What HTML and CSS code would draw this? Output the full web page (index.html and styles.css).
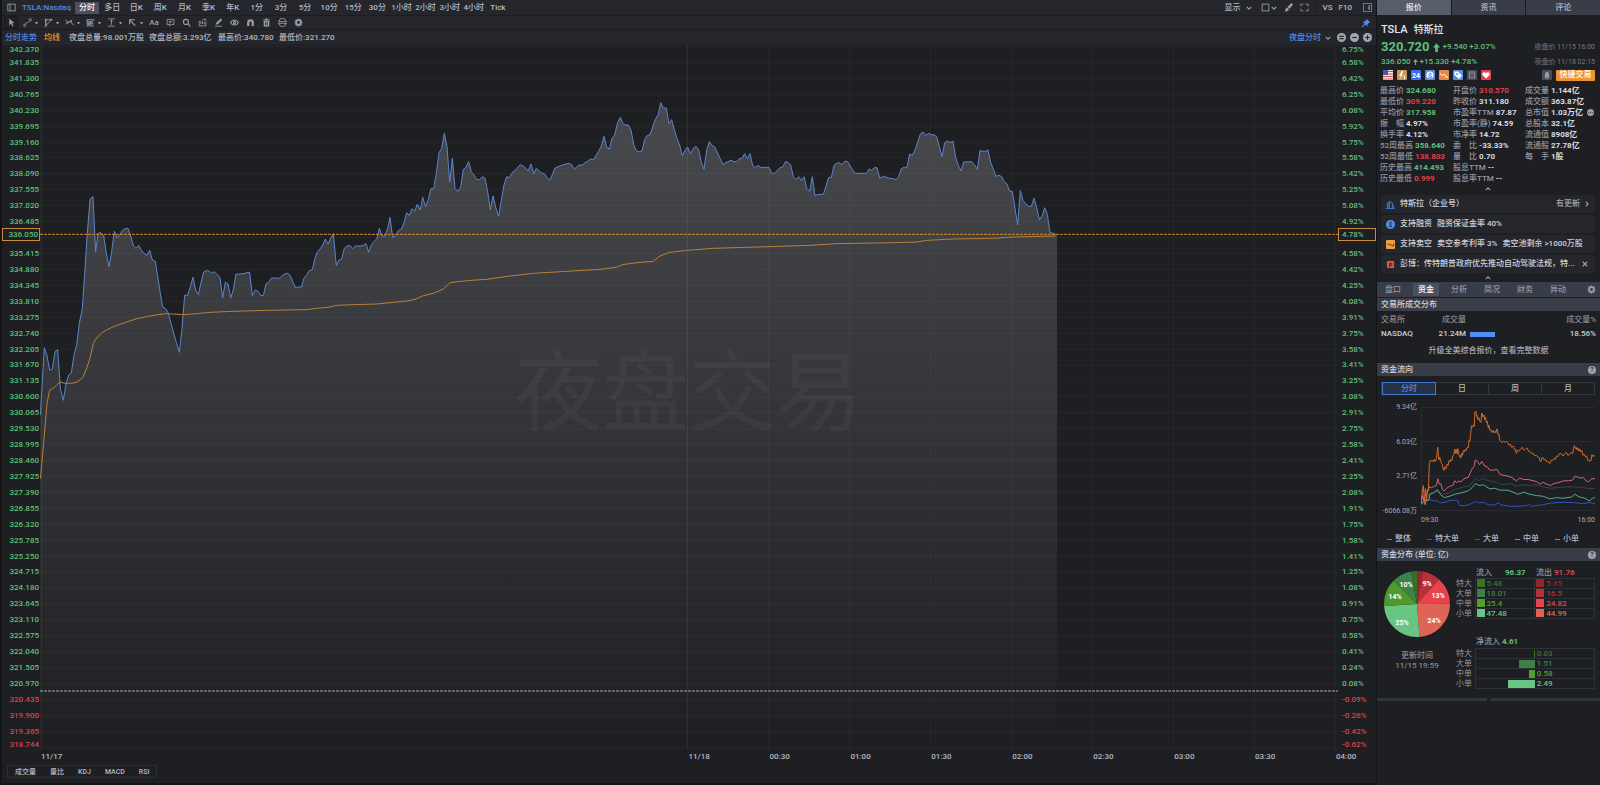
FILE: index.html
```html
<!DOCTYPE html>
<html lang="zh-CN">
<head>
<meta charset="utf-8">
<title>TSLA 特斯拉</title>
<link rel="stylesheet" href="styles.css">
</head>
<body>
<div class="app">
<main class="main">
  <nav class="bar periods">
    <button class="icon-btn" aria-label="侧栏"><svg class="ico" viewBox="0 0 16 16"><rect x="1.500" y="2" width="13" height="12"/><path d="M5.500 2v12"/></svg></button>
    <strong class="symbol">TSLA:Nasdaq</strong>
    <div class="period-list">
      <button class="active">分时</button><button>多日</button><button>日K</button><button>周K</button><button>月K</button><button>季K</button><button>年K</button><button>1分</button><button>3分</button><button>5分</button><button>10分</button><button>15分</button><button>30分</button><button>1小时</button><button>2小时</button><button>3小时</button><button>4小时</button><button>Tick</button>
    </div>
    <div class="bar-right">
      <button class="drop">显示<svg class="caret" viewBox="0 0 8 8"><path d="M1 2.500l3 3 3-3"/></svg></button>
      <button class="drop tight" aria-label="布局"><svg class="ico" viewBox="0 0 16 16"><rect x="2" y="2" width="12" height="12"/></svg><svg class="caret" viewBox="0 0 8 8"><path d="M1 2.500l3 3 3-3"/></svg></button>
      <button class="icon-btn" aria-label="画笔"><svg class="ico" viewBox="0 0 16 16"><path class="solid" d="M13 0l3 3-6 7-4-3zM5 8l4 3c-1 3-4 4-8 4 2-2 1-5 4-7z"/></svg></button>
      <button class="icon-btn" aria-label="全屏"><svg class="ico" viewBox="0 0 16 16"><path d="M1.500 6V2H6M10 2h4.500v4M14.500 10v4H10M6 14H1.500v-4"/></svg></button>
      <i class="sep"></i>
      <button class="txt">VS</button><button class="txt f10">F10</button>
      <button class="icon-btn" aria-label="报价栏"><svg class="ico blue" viewBox="0 0 16 16"><rect x="1" y="1" width="14" height="14"/><path class="solid" d="M9.500 4h3v8h-3z"/></svg></button>
    </div>
  </nav>
  <nav class="bar tools">
    <button class="icon-btn picked" aria-label="选择"><svg class="ico" viewBox="0 0 16 16"><path class="solid" d="M4 1l9 8-4 .5 2.500 4.500-2 1-2.500-5-3 3z"/></svg></button>
    <div class="tool-drops">
      <button class="drop" aria-label="线段"><svg class="ico" viewBox="0 0 16 16"><path d="M4 12c1-4 2-4 4-4s3-1 4-4"/><circle cx="3" cy="13" r="2"/><circle cx="13" cy="3" r="2"/></svg><i class="tri"></i></button>
      <button class="drop" aria-label="形状"><svg class="ico" viewBox="0 0 16 16"><path d="M3 3h10L4 13zM3 3v11"/><circle cx="3" cy="3" r="1.300"/><circle cx="13" cy="3" r="1.300"/><circle cx="3" cy="14" r="1.300"/></svg><i class="tri"></i></button>
      <button class="drop" aria-label="波浪"><svg class="ico" viewBox="0 0 16 16"><path d="M1 3l4 5 5-2 5 7M1 11l4-3M10 6l3-3"/><circle cx="5" cy="8" r="1.300"/><circle cx="10" cy="6" r="1.300"/></svg><i class="tri"></i></button>
      <button class="drop" aria-label="斐波那契"><svg class="ico" viewBox="0 0 16 16"><path d="M1 3h14M2 3v11h12M2 14L14 3M5 7v6M8 6v7M11 7v6M2 9h11M2 6h8"/></svg><i class="tri"></i></button>
      <button class="drop" aria-label="测量"><svg class="ico" viewBox="0 0 16 16"><path d="M2 1.500h12M2 14.500h12M8 3v9M5.500 6L8 3.500 10.500 6"/></svg><i class="tri"></i></button>
      <button class="drop" aria-label="箭头"><svg class="ico heavy" viewBox="0 0 16 16"><path d="M3 11V3h9M3 3l10 11"/></svg><i class="tri"></i></button>
    </div>
    <div class="tool-list">
      <button class="icon-btn aa">Aa</button>
      <button class="icon-btn" aria-label="注释"><svg class="ico" viewBox="0 0 16 16"><path d="M2 2.500h12v9H9l-2.500 3v-3H2zM5 6h6M5 8.500h4"/></svg></button>
      <button class="icon-btn" aria-label="放大"><svg class="ico heavy" viewBox="0 0 16 16"><circle cx="7" cy="7" r="4.500"/><path d="M10.500 10.500L15 15"/></svg></button>
      <button class="icon-btn" aria-label="分享"><svg class="ico" viewBox="0 0 16 16"><path d="M5 6H2v8h12V6M5 11V7M8 11V5M11 11V7M8 4c2-2 4-2 6-1M12 1l2 2-2 2"/></svg></button>
      <button class="icon-btn" aria-label="编辑"><svg class="ico" viewBox="0 0 16 16"><path class="solid" d="M12 1l2.500 2.500L7 11l-4 1 1-3.500z"/><path d="M2 14.500h12"/></svg></button>
      <button class="icon-btn" aria-label="显示隐藏"><svg class="ico heavy" viewBox="0 0 16 16"><path d="M1 8c3-6 11-6 14 0-3 6-11 6-14 0z"/><circle cx="8" cy="8" r="2"/></svg></button>
      <button class="icon-btn" aria-label="磁铁"><svg class="ico" viewBox="0 0 16 16"><path class="magnet" d="M4 14V8a4 4 0 0 1 8 0v6"/></svg></button>
      <button class="icon-btn" aria-label="删除"><svg class="ico" viewBox="0 0 16 16"><path class="solid" d="M6 1h4v1.500h4V4H2V2.500h4zM3 5h10v10H3z"/><path class="cut" d="M6.500 7v6M9.500 7v6"/></svg></button>
      <button class="icon-btn" aria-label="同步"><svg class="ico" viewBox="0 0 16 16"><path d="M2 6.500a6 6 0 0 1 12 0M14 9.500a6 6 0 0 1-12 0M0 6.500h16M0 9.500h16"/></svg></button>
      <button class="icon-btn" aria-label="设置"><svg class="ico gear" viewBox="0 0 16 16"><circle cx="8" cy="8" r="4"/><path class="teeth" d="M8 1v3M8 12v3M1 8h3M12 8h3M3 3l2 2M11 11l2 2M3 13l2-2M11 5l2-2"/></svg></button>
    </div>
    <button class="icon-btn pin" aria-label="固定"><svg class="ico blue" viewBox="0 0 16 16"><path class="solid" d="M9 1l6 6-2 .5-2.500 2.500-.5 3.500-3-3L2 15l-1-1 4.500-5-3-3L6 5.500 8.500 3z"/></svg></button>
  </nav>
  <header class="bar info">
    <div class="info-grid"><a href="#trend" class="blue-t">分时走势</a><span class="orange-t">均线</span><span>夜盘总量:98.001万股</span><span>夜盘总额:3.293亿</span><span>最高价:340.780</span><span>最低价:321.270</span></div>
    <div class="info-right">
      <button class="drop blue-t">夜盘分时<svg class="caret" viewBox="0 0 8 8"><path d="M1 2.500l3 3 3-3"/></svg></button>
      <button class="round" aria-label="重置"><svg viewBox="0 0 16 16"><circle cx="8" cy="8" r="8"/><path d="M4 6h8M4 10h8"/></svg></button>
      <button class="round" aria-label="缩小"><svg viewBox="0 0 16 16"><circle cx="8" cy="8" r="8"/><path d="M4 8h8"/></svg></button>
      <button class="round" aria-label="放大"><svg viewBox="0 0 16 16"><circle cx="8" cy="8" r="8"/><path d="M4 8h8M8 4v8"/></svg></button>
    </div>
  </header>
  <section class="plot">
    <ul class="axis axis-left" id="price-axis"></ul>
    <div class="canvas">
      <svg class="chart" viewBox="120 135 3894 2115" preserveAspectRatio="none">
        <defs><linearGradient id="fade" gradientUnits="userSpaceOnUse" x1="0" y1="300" x2="0" y2="2244"><stop offset="0" stop-color="#fff" stop-opacity=".19"/><stop offset="1" stop-color="#fff" stop-opacity="0"/></linearGradient></defs>
        <path id="area" fill="url(#fade)"/>
        <g id="grid"></g>
        <polyline id="price" class="price" points="121,1245 133,1043 141,1067 149,1111 157,1107 165,1055 173,1049 181,1165 190,1201 198,1152 206,1125 214,1119 222,1065 230,1035 238,970 247,925 254,820 262,700 270,598 279,590 287,755 294,700 303,698 311,706 319,760 327,800 335,755 343,694 351,713 359,705 367,692 375,686 384,685 392,708 401,738 408,745 416,736 425,752 432,760 441,766 449,751 457,780 466,784 473,830 481,880 488,921 497,926 505,940 513,970 522,1003 530,1030 538,1057 546,985 554,886 563,886 571,860 579,832 587,870 595,884 603,848 611,816 620,812 628,814 635,820 643,815 652,824 660,833 668,894 676,847 684,852 692,894 700,870 708,822 716,823 724,821 732,821 740,818 749,817 757,887 766,870 774,874 782,886 790,887 798,852 806,847 814,834 822,834 838,835 847,826 855,822 863,819 871,828 879,847 887,864 895,861 904,861 912,834 920,825 928,812 937,809 945,775 952,756 960,747 968,736 976,717 984,732 993,713 1000,701 1009,797 1017,780 1025,777 1033,745 1041,738 1049,736 1058,746 1066,738 1082,738 1090,736 1098,731 1106,757 1114,734 1122,725 1131,715 1138,685 1146,708 1155,708 1163,685 1170,652 1178,712 1186,708 1195,692 1204,688 1212,668 1220,638 1228,646 1236,626 1244,634 1252,612 1261,630 1268,592 1277,620 1285,598 1293,566 1301,566 1309,520 1317,458 1325,445 1333,400 1341,440 1349,546 1357,475 1365,566 1374,574 1382,562 1390,508 1398,502 1406,485 1414,516 1422,524 1430,539 1439,539 1447,530 1455,535 1463,575 1471,629 1479,588 1487,622 1496,649 1504,600 1512,555 1520,530 1528,533 1536,519 1544,512 1552,504 1561,494 1569,498 1585,512 1593,492 1601,521 1609,505 1625,519 1633,521 1641,533 1650,541 1665,504 1690,494 1707,490 1715,494 1723,508 1735,496 1747,495 1755,488 1763,484 1771,477 1780,480 1788,466 1796,454 1804,438 1812,409 1820,442 1828,447 1836,415 1844,405 1852,370 1861,352 1869,371 1877,375 1885,375 1893,390 1901,433 1909,453 1918,455 1926,453 1934,418 1942,406 1950,404 1966,358 1975,343 1982,308 1990,324 1999,324 2007,372 2015,359 2023,389 2031,415 2039,435 2047,468 2055,451 2063,441 2071,462 2080,445 2088,439 2096,450 2104,487 2112,508 2120,450 2128,425 2136,436 2144,441 2169,494 2177,488 2193,481 2202,485 2210,485 2218,476 2226,475 2234,461 2242,476 2250,461 2258,497 2266,503 2274,496 2282,502 2307,502 2315,520 2324,520 2340,503 2348,501 2356,485 2364,487 2372,495 2380,530 2388,539 2396,530 2404,541 2412,530 2420,565 2429,574 2437,530 2445,587 2454,583 2470,583 2478,558 2486,532 2494,532 2502,496 2510,490 2518,488 2526,494 2534,484 2542,484 2558,510 2566,520 2600,520 2607,507 2615,511 2623,503 2631,503 2639,534 2651,529 2665,534 2680,536 2688,539 2696,530 2704,506 2712,502 2721,502 2729,462 2737,466 2745,450 2753,427 2761,402 2769,396 2777,406 2786,400 2794,404 2802,404 2810,410 2826,470 2834,428 2842,423 2850,428 2859,423 2867,472 2875,496 2883,513 2891,486 2915,485 2923,494 2932,508 2940,451 2948,454 2956,454 2964,450 2972,487 2988,529 2997,526 3005,530 3013,546 3021,552 3029,574 3037,574 3053,675 3061,572 3069,602 3085,619 3094,619 3102,595 3110,622 3118,660 3127,646 3134,623 3142,643 3150,697 3167,703"/>
        <polyline class="average" points="121,1436 127,1375 141,1210 149,1170 160,1165 170,1155 180,1146 195,1150 215,1150 230,1147 248,1133 258,1110 270,1075 280,1030 290,1014 308,996 340,980 380,966 410,956 450,948 480,943 500,941 550,944 590,941 630,937 700,934 800,931 920,929 950,925 990,921 1010,916 1060,914 1130,912 1180,907 1220,903 1245,898 1270,887 1300,880 1330,867 1350,848 1400,842 1460,838 1530,828 1600,820 1700,814 1800,808 1848,802 1868,794 1910,788 1960,784 1976,770 2005,758 2060,751 2140,745 2340,739 2430,736 2510,731 2680,728 2750,726 2780,721 2860,717 2980,715 3040,711 3167,708"/>
        <path class="last" d="M120 703H4014"/>
        <path class="close" d="M120 2073H4014"/>
      </svg>
      <span class="watermark">夜盘交易</span>
    </div>
    <ul class="axis axis-right" id="percent-axis"></ul>
    <b class="tag tag-left">336.050</b>
    <b class="tag tag-right">4.78%</b>
  </section>
  <div class="times"><span class="half">11/17</span><span>11/18</span><span>00:30</span><span>01:00</span><span>01:30</span><span>02:00</span><span>02:30</span><span>03:00</span><span>03:30</span><span class="end">04:00</span></div>
  <div class="indicators"><button>成交量</button><button>量比</button><button>KDJ</button><button>MACD</button><button>RSI</button></div>
</main>

<aside class="side">
  <nav class="side-tabs"><button class="active">报价</button><button>资讯</button><button>评论</button></nav>
  <section class="quote">
    <h1>TSLA<span>特斯拉</span></h1>
    <div class="line big"><b>320.720</b><svg class="up" viewBox="0 0 8 10"><path d="M4 0l4 5H5.500v5h-3V5H0z"/></svg><span>+9.540 +3.07%</span><time>收盘价 11/15 16:00</time></div>
    <div class="line small"><span>336.050</span><svg class="up" viewBox="0 0 8 10"><path d="M4 0l4 5H5v5H3V5H0z"/></svg><span>+15.330 +4.78%</span><time>夜盘价 11/18 02:15</time></div>
    <div class="badges">
      <svg viewBox="0 0 10 10"><path fill="#eee" d="M0 0h10v10H0z"/><path stroke="#d8484f" d="M0 1.500h10M0 4h10M0 6.500h10M0 9h10"/><path fill="#3c5fae" d="M0 0h5v5H0z"/></svg>
      <svg viewBox="0 0 10 10"><rect width="10" height="10" rx="1" fill="#c99a55"/><path fill="#fff" d="M5 1L2 5.500h2L3 9l3-4.500H4.500L6.500 1z"/><path stroke="#fff" d="M7.500 5.500v3.500"/></svg>
      <svg viewBox="0 0 10 10"><rect width="10" height="10" rx="1" fill="#3b6ff0"/><text x="5" y="7.500" font-size="7" font-weight="700" text-anchor="middle" fill="#fff">24</text></svg>
      <svg viewBox="0 0 10 10"><rect width="10" height="10" rx="1" fill="#5290ee"/><circle cx="5" cy="5" r="3.500" fill="#fff"/><text x="5" y="7.500" font-size="7" font-weight="700" text-anchor="middle" fill="#4a86e8">$</text></svg>
      <svg viewBox="0 0 10 10"><rect width="10" height="10" rx="1" fill="#e38a4b"/><path fill="none" stroke="#fff" d="M1 3.500l2.500 2L5 4l2 3h2"/></svg>
      <svg viewBox="0 0 10 10"><rect width="10" height="10" rx="1" fill="#5290ee"/><path fill="#fff" d="M1.500 1.500H5L9 5.500 6 9 1.500 5z"/><circle cx="4" cy="4" r="1" fill="#5290ee"/></svg>
      <svg viewBox="0 0 10 10"><rect width="10" height="10" rx="1" fill="#494d57"/><path fill="none" stroke="#8b8f99" d="M2.500 2h5v6L5 7 2.500 8zM4 4h2"/></svg>
      <svg viewBox="0 0 10 10"><rect width="10" height="10" rx="1" fill="#e34350"/><path fill="#fff" d="M5 8.500L1.500 5C.500 3 3.500 1 5 3.200 6.500 1 9.500 3 8.500 5z"/></svg>
      <svg class="bell" viewBox="0 0 10 10"><rect width="10" height="10" rx="1" fill="#494d57"/><path fill="#9a9da6" d="M2 7.500l1-1V4a2 2 0 0 1 4 0v2.500l1 1zM4 8h2v1H4z"/></svg>
      <button class="trade">快捷交易</button>
    </div>
    <div class="stats">
      <dl>
        <div><dt>最高价</dt><dd class="g">324.680</dd></div><div><dt>最低价</dt><dd class="r">309.220</dd></div><div><dt>平均价</dt><dd class="g">317.958</dd></div><div><dt>振　幅</dt><dd>4.97%</dd></div><div><dt>换手率</dt><dd>4.12%</dd></div><div><dt>52周最高</dt><dd class="g">358.640</dd></div><div><dt>52周最低</dt><dd class="r">138.803</dd></div><div><dt>历史最高</dt><dd class="g">414.493</dd></div><div><dt>历史最低</dt><dd class="r">0.999</dd></div>
      </dl>
      <dl>
        <div><dt>开盘价</dt><dd class="r">310.570</dd></div><div><dt>昨收价</dt><dd>311.180</dd></div><div><dt>市盈率TTM</dt><dd>87.87</dd></div><div><dt>市盈率(静)</dt><dd>74.59</dd></div><div><dt>市净率</dt><dd>14.72</dd></div><div><dt>委　比</dt><dd>-33.33%</dd></div><div><dt>量　比</dt><dd>0.70</dd></div><div><dt>股息TTM</dt><dd>--</dd></div><div><dt>股息率TTM</dt><dd>--</dd></div>
      </dl>
      <dl>
        <div><dt>成交量</dt><dd>1.144亿</dd></div><div><dt>成交额</dt><dd>363.87亿</dd></div><div><dt>总市值</dt><dd>1.03万亿</dd><svg class="more" viewBox="0 0 8 8"><circle cx="4" cy="4" r="4"/><path d="M1.500 4h5"/></svg></div><div><dt>总股本</dt><dd>32.1亿</dd></div><div><dt>流通值</dt><dd>8908亿</dd></div><div><dt>流通股</dt><dd>27.78亿</dd></div><div><dt>每　手</dt><dd>1股</dd></div>
      </dl>
    </div>
    <button class="fold" aria-label="收起"><svg class="caret" viewBox="0 0 8 8"><path d="M1 5.500l3-3 3 3"/></svg></button>
    <ul class="notes">
      <li><svg viewBox="0 0 10 10"><path fill="none" stroke="#4a7fd8" d="M0 9.500h10M1.500 9V4l2-1v6M3.500 9V1.500L7 3v6M7 5l1.500 1v3"/></svg><span>特斯拉（企业号）</span><a href="#news">有更新<svg class="caret" viewBox="0 0 8 8"><path d="M2.500 1l3 3-3 3"/></svg></a></li>
      <li><svg viewBox="0 0 10 10"><circle cx="5" cy="5" r="5" fill="#5290ee"/><text x="5" y="7.500" font-size="7" font-weight="700" text-anchor="middle" fill="#1f2938">$</text></svg><span>支持融资</span><span>融资保证金率 40%</span></li>
      <li><svg viewBox="0 0 10 10"><rect width="10" height="10" rx="1" fill="#f0a03a"/><path fill="none" stroke="#4a3218" d="M1.500 4l2 1.500L5 4.500l1.500 2h2V4"/></svg><span>支持卖空</span><span>卖空参考利率 3%</span><span>卖空池剩余 &gt;1000万股</span></li>
      <li><svg viewBox="0 0 10 10"><path fill="#e05a3c" d="M2 1h6l1 1v7H2L1 8V2z"/><path fill="none" stroke="#25262b" d="M4 8V3.500h2.500V6H4"/></svg><span>彭博：传特朗普政府优先推动自动驾驶法规，特...</span><button class="dismiss" aria-label="关闭"><svg class="caret" viewBox="0 0 8 8"><path d="M1 1l6 6M7 1L1 7"/></svg></button></li>
    </ul>
    <button class="fold low" aria-label="收起"><svg class="caret" viewBox="0 0 8 8"><path d="M1 5.500l3-3 3 3"/></svg></button>
  </section>
  <nav class="sub-tabs"><button>盘口</button><button class="active">资金</button><button>分析</button><button>简况</button><button>财务</button><button>异动</button><button class="cog" aria-label="设置"><svg class="ico gear" viewBox="0 0 16 16"><circle cx="8" cy="8" r="4"/><path class="teeth" d="M8 1v3M8 12v3M1 8h3M12 8h3M3 3l2 2M11 11l2 2M3 13l2-2M11 5l2-2"/></svg></button></nav>
  <h2>交易所成交分布</h2>
  <table class="venues">
    <thead><tr><th class="c1">交易所</th><th class="c2">成交量</th><th class="c3"></th><th class="c4">成交量%</th></tr></thead>
    <tbody><tr><td>NASDAQ</td><td class="c2">21.24M</td><td class="c3"><i class="vol"></i></td><td class="c4">18.56%</td></tr></tbody>
  </table>
  <a class="upgrade" href="#upgrade">升级全美综合报价，查看完整数据</a>
  <h2>资金流向<button class="help" aria-label="说明">?</button></h2>
  <div class="segments"><button class="active">分时</button><button>日</button><button>周</button><button>月</button></div>
  <div class="flow">
    <ul class="flow-y"><li>9.34亿</li><li>6.03亿</li><li>2.71亿</li><li>-6066.08万</li></ul>
    <svg class="flow-chart" viewBox="155 142 520 310" preserveAspectRatio="none">
      <path stroke="#2c2e35" d="M155 143H675M155 245H675M155 348H675M155 451H675M156 142V452"/>
      <polyline stroke="#2a55c4" points="155,432 165,420 180,418 195,422 205,422 212,428 230,425 245,420 265,420 270,436 290,436 305,430 320,424 328,428 342,426 358,434 375,434 387,428 395,434 420,438 445,438 470,436 477,432 483,438 515,434 545,428 580,426 610,427 640,430 660,426 668,430 675,430"/>
      <polyline stroke="#3c4254" points="155,432 168,425 180,400 205,394 222,402 240,398 256,388 275,382 296,378 310,366 318,354 328,362 340,354 352,360 365,364 380,366 392,372 405,374 420,370 440,378 460,374 480,376 500,374 520,380 542,384 565,382 590,380 615,380 640,382 660,386 675,384"/>
      <polyline stroke="#4fae90" points="155,430 165,422 178,420 182,402 192,398 204,388 214,404 225,412 240,408 256,402 275,398 296,392 308,382 318,370 328,376 342,374 360,386 375,384 392,390 415,390 430,396 445,402 462,396 480,402 500,406 520,408 540,416 560,412 580,414 606,410 614,402 628,410 645,414 658,422 668,414 675,412"/>
      <polyline stroke="#cf6a72" points="155,432 160,405 165,428 168,434 173,400 180,380 186,383 195,378 201,376 205,356 210,372 214,370 219,388 224,392 232,384 241,378 250,376 256,362 262,368 268,362 274,366 283,356 296,352 303,336 308,326 314,318 317,300 323,304 330,314 337,304 345,318 353,320 360,330 372,330 382,328 390,342 400,345 415,348 426,352 440,362 450,354 462,358 475,358 490,362 500,364 512,372 520,366 530,372 542,376 552,370 565,368 580,362 595,362 608,360 616,348 630,354 640,352 648,362 656,365 665,356 675,356"/>
      <polyline stroke="#d06a28" points="155,432 158,400 162,376 165,425 168,385 171,420 174,388 177,392 180,310 183,300 186,304 190,300 192,306 195,298 198,304 201,296 203,280 205,262 207,288 209,300 211,292 214,302 216,310 219,314 221,326 224,331 227,320 230,326 233,312 236,316 239,302 241,306 244,298 247,302 250,288 253,284 256,268 258,280 260,268 263,282 265,266 268,284 270,290 272,286 274,294 277,280 279,286 282,272 284,276 287,268 290,272 293,262 296,264 299,240 301,244 303,225 306,198 309,202 312,195 314,200 316,158 319,154 321,170 323,168 325,180 328,174 330,184 334,188 336,162 338,160 340,172 343,166 345,180 348,172 350,188 353,184 356,204 358,196 361,212 364,210 366,218 371,212 373,220 377,214 379,218 381,208 383,208 385,224 388,222 390,240 392,243 397,248 402,243 406,248 410,244 414,248 418,256 422,252 426,262 430,258 434,268 437,268 440,280 443,270 447,274 452,268 457,262 460,268 465,270 470,265 473,265 476,274 480,274 484,280 490,280 495,288 500,286 505,292 508,292 511,304 513,306 516,294 519,292 523,300 527,298 531,306 534,304 538,310 541,310 544,300 547,302 552,296 556,298 560,288 564,290 568,282 573,280 577,286 580,288 585,280 590,278 594,286 598,284 603,278 608,280 611,268 613,257 616,266 619,262 621,270 624,264 627,274 630,268 633,276 636,272 639,286 642,282 646,290 650,288 653,300 656,304 660,300 663,302 666,284 669,290 672,286 675,290"/>
    </svg>
    <div class="flow-x"><span>09:30</span><span>16:00</span></div>
  </div>
  <ul class="legend"><li class="l-all">整体</li><li class="l-xl">特大单</li><li class="l-l">大单</li><li class="l-m">中单</li><li class="l-s">小单</li></ul>
  <h2>资金分布 (单位: 亿)<button class="help" aria-label="说明">?</button></h2>
  <section class="spread">
    <div class="spread-left">
      <svg class="pie" viewBox="0 0 68 68">
        <g fill="none" stroke-width="33" transform="rotate(-90 34 34)">
          <circle cx="34" cy="34" r="16.500" pathLength="188" stroke="#96262d" stroke-dasharray="5.400 188"/>
          <circle cx="34" cy="34" r="16.500" pathLength="188" stroke="#b73139" stroke-dasharray="16.500 188" stroke-dashoffset="-5.400"/>
          <circle cx="34" cy="34" r="16.500" pathLength="188" stroke="#e9424e" stroke-dasharray="24.800 188" stroke-dashoffset="-21.900"/>
          <circle cx="34" cy="34" r="16.500" pathLength="188" stroke="#de6555" stroke-dasharray="45 188" stroke-dashoffset="-46.700"/>
          <circle cx="34" cy="34" r="16.500" pathLength="188" stroke="#68c582" stroke-dasharray="47.500 188" stroke-dashoffset="-91.700"/>
          <circle cx="34" cy="34" r="16.500" pathLength="188" stroke="#4f9a2b" stroke-dasharray="25.400 188" stroke-dashoffset="-139.200"/>
          <circle cx="34" cy="34" r="16.500" pathLength="188" stroke="#3f8049" stroke-dasharray="18 188" stroke-dashoffset="-164.600"/>
          <circle cx="34" cy="34" r="16.500" pathLength="188" stroke="#37701f" stroke-dasharray="5.400 188" stroke-dashoffset="-182.600"/>
        </g>
        <g class="pie-text"><text x="44" y="16">9%</text><text x="55" y="28">13%</text><text x="51" y="53">24%</text><text x="19" y="55">25%</text><text x="12" y="29">14%</text><text x="23" y="17">10%</text></g>
      </svg>
      <p>更新时间<br>11/15 19:59</p>
    </div>
    <div class="spread-right">
      <div class="totals"><span>流入</span><b class="g in">96.37</b><span>流出</span><b class="r">91.76</b></div>
      <table class="grid-table">
        <tr><th>特大</th><td class="k1">5.48</td><td class="k5">5.45</td></tr>
        <tr><th>大单</th><td class="k2">18.01</td><td class="k6">16.5</td></tr>
        <tr><th>中单</th><td class="k3">25.4</td><td class="k7">24.82</td></tr>
        <tr><th>小单</th><td class="k4">47.48</td><td class="k8">44.99</td></tr>
      </table>
      <div class="totals net"><span>净流入</span><b class="g">4.61</b></div>
      <table class="grid-table net-table">
        <tr><th>特大</th><td class="k1"><i style="width:1px"></i></td><td class="k1">0.03</td></tr>
        <tr><th>大单</th><td class="k2"><i style="width:16px"></i></td><td class="k2">1.51</td></tr>
        <tr><th>中单</th><td class="k3"><i style="width:6px"></i></td><td class="k3">0.58</td></tr>
        <tr><th>小单</th><td class="k4"><i style="width:27px"></i></td><td class="k4">2.49</td></tr>
      </table>
    </div>
  </section>
  <div class="side-end"><i></i><i></i></div>
</aside>
</div>
<script src="chart.js"></script>
</body>
</html>
```
FILE: chart.js
```js
const SVG = 'http://www.w3.org/2000/svg';
const HIGH = 342.37, STEP = 0.535, LOW = 318.744, CLOSE = 320.72, LAST_ROW = 12;
const priceAxis = document.getElementById('price-axis');
const percentAxis = document.getElementById('percent-axis');
const grid = document.getElementById('grid');

function label(axis, text, cls) {
  const li = document.createElement('li');
  li.textContent = text;
  li.className = cls;
  axis.append(li);
}
function line(x1, y1, x2, y2, cls) {
  const l = document.createElementNS(SVG, 'path');
  l.setAttribute('d', `M${x1} ${y1}L${x2} ${y2}`);
  l.setAttribute('class', cls);
  grid.append(l);
}
for (let i = 0; i <= 44; i++) {
  const p = i === 44 ? LOW : HIGH - i * STEP;
  const pct = (p / CLOSE - 1) * 100;
  const cls = p > CLOSE ? 'g' : 'r';
  label(priceAxis, i === LAST_ROW ? '' : p.toFixed(3), cls);
  label(percentAxis, i === LAST_ROW ? '' : pct.toFixed(2) + '%', cls);
  line(120, 139 + i * 47.8, 4014, 139 + i * 47.8, 'rule');
}
line(124, 135, 124, 2250, 'rule strong');
for (let i = 0; i <= 8; i++) line(2062 + i * 243, 135, 2062 + i * 243, 2250, i ? 'rule' : 'rule strong');

const points = document.getElementById('price').getAttribute('points');
document.getElementById('area').setAttribute('d', `M${points} L3171 703V2250H121Z`);
```
FILE: styles.css
```css
* { box-sizing: border-box; }
body { margin: 0; background: #1e1f23; color: #b4b8c3; font: 500 8px/10px Roboto, "Noto Sans CJK SC", sans-serif; }
button { margin: 0; padding: 0; border: 0; background: none; color: inherit; font: inherit; white-space: nowrap; display: flex; align-items: center; justify-content: center; }
a { color: inherit; text-decoration: none; }
ul, dl, dd, p, h1, h2 { margin: 0; padding: 0; list-style: none; }
svg { display: block; }
.g { color: #5fbf7a; }
.r { color: #dd424c; }
.blue-t { color: #5089e8; }
.orange-t { color: #e79637; }

.app { display: flex; min-height: 100vh; }
.main { flex: 1; min-width: 0; display: flex; flex-direction: column; border-left: 2px solid #131417; border-bottom: 2px solid #131417; }
.bar { display: flex; align-items: center; background: #25262b; flex: none; }
.periods { height: 15px; padding: 0 4px; }
.tools { height: 15px; border-top: 1px solid #1c1d21; border-bottom: 1px solid #1c1d21; }
.info { height: 15px; padding: 0 4px 0 3px; justify-content: space-between; }
.ico { width: 9px; height: 9px; fill: none; stroke: #9a9da8; stroke-width: 1.5; }
.ico .solid { fill: #9a9da8; stroke: none; }
.ico.blue { stroke: #5089e8; }
.ico.blue .solid { fill: #5089e8; }
.ico.heavy { stroke-width: 2; }
.ico .magnet { stroke-width: 4; }
.ico .cut { stroke: #25262b; }
.ico.gear { stroke-width: 3; }
.caret { width: 6px; height: 6px; fill: none; stroke: #9a9da8; stroke-width: 1.5; }
.icon-btn { width: 10px; height: 13px; flex: none; }
.symbol { color: #5089e8; width: 52px; margin-left: 6px; font-size: 8px; font-weight: 500; }
.period-list { display: flex; width: 436px; }
.period-list button { flex: 1 1 0; height: 12px; }
.period-list .active { background: #4b505c; color: #fff; border-radius: 1px; margin: 0 1px; }
.bar-right { margin-left: auto; display: flex; align-items: center; gap: 6px; }
.drop { gap: 6px; }
.bar-right .tight { gap: 1px; margin-left: 3px; }
.sep { width: 1px; height: 11px; background: #1c1d21; }
.bar-right .f10 { margin-right: 4px; }

.tools .icon-btn { width: 16px; }
.tools .picked { width: 14px; border: 1px solid #191a1d; margin: 0 2px; background: #202125; }
.tool-drops { display: flex; }
.tools .drop { width: 21px; gap: 3px; height: 13px; }
.tri { border: 1px solid transparent; border-top: 2px solid #9a9da8; border-bottom: 0; width: 3px; }
.tool-list { display: flex; }
.tools .aa { color: #9a9da8; }
.tools .pin { margin-left: auto; margin-right: 2px; }
.tools .pin .ico { width: 10px; height: 10px; }
.info-grid { display: grid; grid-template-columns: 39px 25px 80px 69px 61px auto; white-space: nowrap; }
.info-right { display: flex; align-items: center; gap: 4px; }
.info-right .drop { gap: 4px; margin-right: 2px; }
.round svg { width: 9px; height: 9px; fill: #a2a5ae; stroke: #25262b; stroke-width: 2; }
.round circle { stroke: none; }

.plot { flex: 1; display: grid; grid-template-columns: 38px 1fr 38px; min-height: 0; position: relative; }
.axis { display: flex; flex-direction: column; justify-content: space-between; margin: -3px 0; }
.axis li { height: 10px; line-height: 10px; }
.axis li:first-child { line-height: 16px; }
.axis li:last-child { line-height: 4px; }
.axis-left { text-align: right; padding-right: 1px; }
.axis-right { padding-left: 4px; }
.canvas { position: relative; min-height: 0; }
.chart { position: absolute; inset: 0; width: 100%; height: 100%; fill: none; }
.chart path, .chart polyline, .flow-chart path, .flow-chart polyline { vector-effect: non-scaling-stroke; }
.rule { stroke: #fff; stroke-opacity: .04; }
.rule.strong { stroke-opacity: .08; }
.price { stroke: #5b85cc; stroke-width: 1; }
.average { stroke: #b98039; stroke-width: 1; }
.last { stroke: #c98d3c; stroke-dasharray: 3 1; }
.close { stroke: #63656a; stroke-width: 2; stroke-dasharray: 3 1; }
.watermark { position: absolute; inset: 0; display: flex; align-items: center; justify-content: center; font-size: 87px; font-weight: 400; color: rgba(255, 255, 255, .04); padding-bottom: 8px; }
.tag { position: absolute; top: 26%; height: 13px; border: 1px solid #c98d3c; background: #1e1f23; color: #5fbf7a; font-weight: 500; line-height: 11px; }
.tag-left { left: 0; width: 38px; text-align: right; padding-right: 1px; }
.tag-right { right: 0; width: 38px; padding-left: 3px; }
.times { flex: none; height: 15px; padding: 2px 0 0 39px; margin-right: 20px; display: flex; }
.times span { flex: 1 1 0; min-width: 0; }
.times .half { flex-grow: 8; }
.times .end { flex: none; width: 20px; }
.indicators { flex: none; display: flex; align-self: flex-start; gap: 14px; height: 13px; margin: 0 0 5px 5px; padding: 0 7px; border: 1px solid #2c2e34; font-size: 7px; }

.side { width: 224px; flex: none; border-left: 1px solid #131417; }
.side-tabs { display: flex; gap: 1px; height: 15px; background: #1a1b1e; }
.side-tabs button { flex: 1; background: #393d47; }
.side-tabs .active { background: #585d6a; color: #e8eaf0; }
.quote { padding: 8px 5px 0 4px; }
h1 { font: 500 11px/14px Roboto, "Noto Sans CJK SC", sans-serif; color: #e2e4ea; }
h1 span { margin-left: 6px; font-size: 10px; }
.line { display: flex; align-items: center; color: #5fbf7a; gap: 3px; white-space: nowrap; }
.big { height: 20px; }
.big b { font-size: 13px; }
.small { height: 10px; gap: 2px; }
.line time { margin-left: auto; color: #777a84; font-size: 7px; font-weight: 400; }
.up { width: 5px; height: 6px; fill: #5fbf7a; }
.big .up { width: 7px; height: 9px; }
.badges { display: flex; gap: 4px; height: 14px; align-items: center; padding: 2px 0 0 2px; }
.badges svg { width: 10px; height: 10px; }
.badges .bell { margin-left: auto; }
.trade { width: 39px; height: 11px; background: #ee9430; color: #fff; font-weight: 500; border-radius: 1px; }
.stats { display: grid; grid-template-columns: 73px 72px 1fr; padding-top: 4px; margin-left: -1px; white-space: nowrap; }
.stats div { display: flex; height: 11px; align-items: center; gap: 2px; }
.stats dt { color: #9396a1; }
.stats dd { font-weight: 700; }
.stats dd:not(.g):not(.r) { color: #d9dbe2; }
.more { width: 7px; height: 7px; fill: #9a9da8; stroke: #25262b; stroke-dasharray: 1 1; margin-left: 2px; }
.more circle { stroke: none; }
.fold { width: 100%; height: 11px; padding-bottom: 2px; }
.notes { display: grid; gap: 2px; }
.notes li { display: flex; align-items: center; height: 18px; padding: 0 5px; gap: 5px; background: #25262b; border-radius: 2px; color: #cfd1d9; white-space: nowrap; }
.notes li > svg { width: 9px; height: 9px; flex: none; }
.notes a { margin-left: auto; display: flex; align-items: center; gap: 4px; color: #a0a3ad; }
.dismiss { margin-left: auto; padding-right: 2px; }
.fold.low { height: 9px; padding: 0; }
.sub-tabs { display: flex; height: 15px; background: #393d47; color: #9396a1; margin-bottom: 1px; }
.sub-tabs button { width: 26px; margin: 1px 4px 1px 3px; }
.sub-tabs .active { background: #4b505c; color: #fff; }
.sub-tabs .cog { width: 14px; margin: 0 0 0 auto; padding-right: 4px; }
h2 { display: flex; align-items: center; justify-content: space-between; height: 13px; padding: 0 4px; background: #393d47; color: #d2d4db; font: 500 8px/10px Roboto, "Noto Sans CJK SC", sans-serif; }
.help { width: 8px; height: 8px; border-radius: 50%; background: #a2a5ae; color: #393d47; font-weight: 700; font-size: 7px; }
.venues { width: 100%; border-spacing: 0; margin-top: 2px; }
.venues th { font-weight: 400; text-align: left; color: #9fa2ac; }
.venues th, .venues td { padding: 0 4px; height: 14px; }
.venues td { color: #cfd1d9; }
.venues .c2 { width: 40px; text-align: right; padding: 0; }
.venues .c4 { text-align: right; }
.venues .c1 { width: 49px; }
.vol { display: block; width: 25px; height: 5px; background: #4f8df5; }
.upgrade { display: block; text-align: center; height: 22px; line-height: 20px; color: #a8abb5; }
.segments { display: flex; margin: 6px 5px 0 4px; border: 1px solid #34373f; height: 13px; }
.segments button { flex: 1; border-right: 1px solid #34373f; }
.segments button:last-child { border: 0; }
.segments .active { border: 1px solid #4577cc; margin: -1px 0; background: #25334a; color: #5089e8; }
.flow { display: grid; grid-template: 104px 20px / 40px 1fr; column-gap: 4px; margin: 12px 5px 0 0; font-size: 7px; font-weight: 400; color: #a8abb5; }
.flow-y { display: flex; flex-direction: column; justify-content: space-between; margin: -5px 0; text-align: right; white-space: nowrap; }
.flow-chart { width: 100%; height: 100%; fill: none; }
.flow-x { grid-column: 2; display: flex; justify-content: space-between; padding-top: 4px; }
.legend { display: flex; height: 17px; padding: 3px 0 0 10px; align-items: flex-start; }
.legend li { width: 40px; display: flex; gap: 3px; white-space: nowrap; align-items: center; }
.legend .l-xl { width: 48px; }
.legend li::before { content: ""; width: 5px; height: 1px; background: currentColor; flex: none; }
.legend .l-all::before { background: #d06a28; }
.legend .l-xl::before { background: #2a55c4; }
.legend .l-l::before { background: #4a5166; }
.legend .l-m::before { background: #4fae90; }
.legend .l-s::before { background: #cf6a72; }
.spread { display: flex; padding: 6px 5px 0 6px; }
.spread-left { width: 68px; margin-right: 5px; padding-top: 3px; text-align: center; color: #858893; }
.pie { width: 68px; height: 68px; }
.pie-text { fill: #fff; font-size: 7px; font-weight: 700; text-anchor: middle; }
.spread-left p { margin-top: 13px; }
.spread-right { flex: 1; }
.totals { display: flex; height: 11px; padding-left: 20px; color: #9396a1; gap: 2px; align-items: center; }
.totals .in { width: 33px; padding-left: 11px; margin-right: 7px; }
.net { margin-top: 17px; margin-bottom: 1px; }
.grid-table { width: 100%; border-collapse: collapse; table-layout: fixed; }
.grid-table th { width: 19px; padding: 0; font-weight: 400; color: #9396a1; text-align: left; }
.grid-table td { height: 10px; padding: 0 0 0 1px; border: 1px solid #2f3138; line-height: 9px; }
.grid-table td::before { content: ""; display: inline-block; width: 8px; height: 8px; background: currentColor; margin-right: 2px; vertical-align: top; }
.net-table td { padding: 0 0 0 2px; border-left: 0; border-right: 0; }
.net-table td:nth-child(2) { border-left: 1px solid #2f3138; padding: 0; }
.net-table td:last-child { border-right: 1px solid #2f3138; }
.net-table td::before { display: none; }
.net-table i { display: block; height: 8px; margin-left: auto; background: currentColor; }
.k1 { color: #3a7324; } .k2 { color: #3f8049; } .k3 { color: #549e2c; } .k4 { color: #68c582; }
.k5 { color: #96262d; } .k6 { color: #b73139; } .k7 { color: #e9424e; } .k8 { color: #de6555; }
.side-end { display: flex; gap: 3px; margin-top: 9px; }
.side-end i { flex: 1; height: 3px; background: #31343d; }
```
